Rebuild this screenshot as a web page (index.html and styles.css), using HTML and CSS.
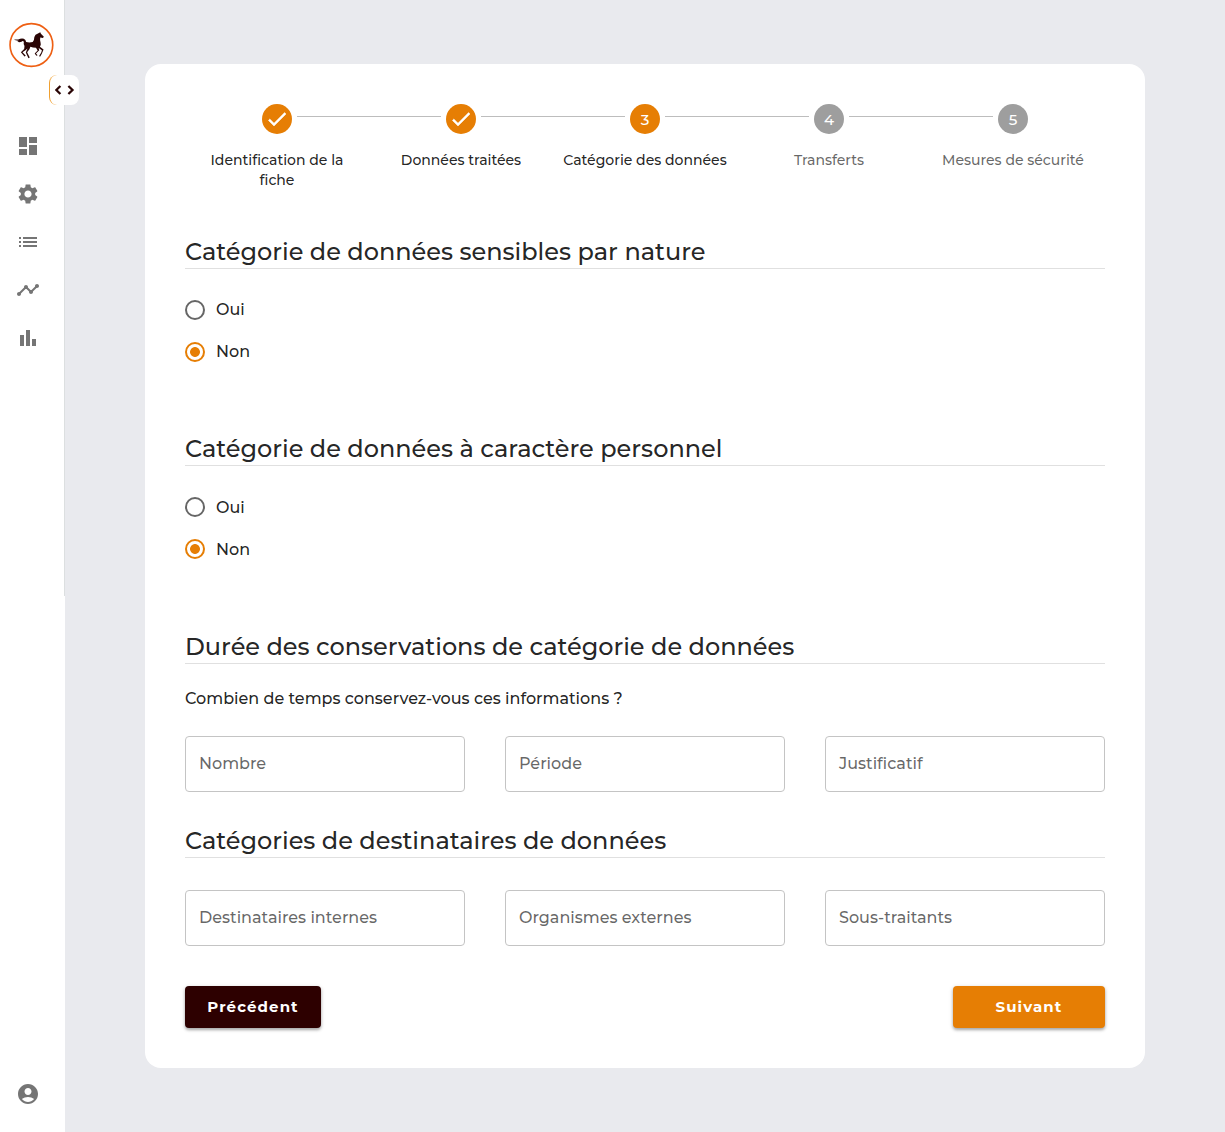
FILE: index.html
```html
<!DOCTYPE html>
<html lang="fr">
<head>
<meta charset="utf-8">
<title>Catégorie des données</title>
<link rel="stylesheet" href="styles.css">
</head>
<body>
<div class="app">
  <aside class="sidebar">
    <div class="edge"></div>
    <svg class="logo" viewBox="22.800 20 140 140">
      <circle cx="94" cy="90" r="65" fill="#fff" stroke="#ee5f13" stroke-width="5"/>
      <path fill="#2a0505" d="M42 73 L54 73 Q63 69 71 71 Q77 74 78 81 Q88 84 98 81 Q103 76 103 66 Q105 57 114 55 L121 51 L123 56 L132 65 L129 69 L121 67 Q119 76 122 83 Q124 89 120 95 L131 104 L126 116 L121 125 L117 124 L124 113 L126 106 L116 99 L118 106 L108 116 L113 121 L109 123 L104 116 L113 107 L108 98 Q98 98 91 95 L88 103 L81 112 L89 128 L85 130 L77 113 L82 101 L77 105 L67 112 L77 123 L73 125 L62 112 L72 102 L73 93 Q69 88 71 80 Q68 76 64 80 Q56 83 51 79 L56 78 L43 75 Z"/>
    </svg>
    <button class="toggle" aria-label="Menu">
      <svg width="20" height="12" viewBox="0 0 20 12" fill="none" stroke="#2a0505" stroke-width="2.3"><path d="M5.400 2 1.300 6l4.100 4M13.400 2l4.100 4-4.100 4"/></svg>
    </button>
    <nav class="nav">
      <svg viewBox="0 0 24 24"><path d="M3 13h8V3H3v10zm0 8h8v-6H3v6zm10 0h8V11h-8v10zm0-18v6h8V3h-8z"/></svg>
      <svg viewBox="0 0 24 24"><path d="M19.14 12.94c.04-.3.06-.61.06-.94 0-.32-.02-.64-.07-.94l2.03-1.58c.18-.14.23-.41.12-.61l-1.92-3.32c-.12-.22-.37-.29-.59-.22l-2.39.96c-.5-.38-1.03-.7-1.62-.94l-.36-2.54c-.04-.24-.24-.41-.48-.41h-3.84c-.24 0-.43.17-.47.41l-.36 2.54c-.59.24-1.13.57-1.62.94l-2.39-.96c-.22-.08-.47 0-.59.22L2.74 8.87c-.12.21-.08.47.12.61l2.03 1.58c-.05.3-.09.63-.09.94s.02.64.07.94l-2.03 1.58c-.18.14-.23.41-.12.61l1.92 3.32c.12.22.37.29.59.22l2.39-.96c.5.38 1.03.7 1.62.94l.36 2.54c.05.24.24.41.48.41h3.84c.24 0 .44-.17.47-.41l.36-2.54c.59-.24 1.13-.56 1.62-.94l2.39.96c.22.08.47 0 .59-.22l1.92-3.32c.12-.22.07-.47-.12-.61l-2.01-1.58zM12 15.6c-1.98 0-3.6-1.62-3.6-3.6s1.62-3.6 3.6-3.6 3.6 1.62 3.6 3.6-1.62 3.6-3.6 3.6z"/></svg>
      <svg viewBox="0 0 24 24"><path d="M3 13h2v-2H3v2zm0 4h2v-2H3v2zm0-8h2V7H3v2zm4 4h14v-2H7v2zm0 4h14v-2H7v2zM7 7v2h14V7H7z"/></svg>
      <svg viewBox="0 0 24 24"><path d="M23 8c0 1.1-.9 2-2 2-.18 0-.35-.02-.51-.07l-3.56 3.55c.05.16.07.34.07.52 0 1.1-.9 2-2 2s-2-.9-2-2c0-.18.02-.36.07-.52l-2.55-2.55c-.16.05-.34.07-.52.07s-.36-.02-.52-.07l-4.55 4.56c.05.16.07.33.07.51 0 1.1-.9 2-2 2s-2-.9-2-2 .9-2 2-2c.18 0 .35.02.51.07l4.56-4.55C8.02 9.36 8 9.18 8 9c0-1.1.9-2 2-2s2 .9 2 2c0 .18-.02.36-.07.52l2.55 2.55c.16-.05.34-.07.52-.07s.36.02.52.07l3.55-3.56C19.02 8.35 19 8.18 19 8c0-1.1.9-2 2-2s2 .9 2 2z"/></svg>
      <svg viewBox="0 0 24 24"><path d="M4 9h4v11H4zm12 4h4v7h-4zm-6-9h4v16h-4z"/></svg>
    </nav>
    <svg class="account" viewBox="0 0 24 24"><path d="M12 2C6.48 2 2 6.48 2 12s4.480 10 10 10 10-4.480 10-10S17.520 2 12 2zm0 4c1.930 0 3.500 1.570 3.500 3.500S13.930 13 12 13s-3.500-1.570-3.500-3.500S10.070 6 12 6zm0 14c-2.030 0-4.430-.820-6.140-2.880C7.550 15.800 9.680 15 12 15s4.450.800 6.140 2.120C16.430 19.180 14.030 20 12 20z"/></svg>
  </aside>

  <main class="main">
    <form class="card">
      <ol class="stepper">
        <li class="step on"><span class="track"><i></i><b><svg viewBox="0 0 24 24"><path d="M9 16.170 4.830 12l-1.420 1.410L9 19 21 7l-1.410-1.410z"/></svg></b><i class="line"></i></span><span class="label s1">Identification de la fiche</span></li>
        <li class="step on"><span class="track"><i class="line"></i><b><svg viewBox="0 0 24 24"><path d="M9 16.170 4.830 12l-1.420 1.410L9 19 21 7l-1.410-1.410z"/></svg></b><i class="line"></i></span><span class="label">Données traitées</span></li>
        <li class="step on"><span class="track"><i class="line"></i><b>3</b><i class="line"></i></span><span class="label">Catégorie des données</span></li>
        <li class="step"><span class="track"><i class="line"></i><b>4</b><i class="line"></i></span><span class="label">Transferts</span></li>
        <li class="step"><span class="track"><i class="line"></i><b>5</b><i></i></span><span class="label">Mesures de sécurité</span></li>
      </ol>

      <section class="choice">
        <h2>Catégorie de données sensibles par nature</h2>
        <label class="option"><input type="radio" name="sensible"><span>Oui</span></label>
        <label class="option"><input type="radio" name="sensible" checked><span>Non</span></label>
      </section>
      <section class="choice">
        <h2>Catégorie de données à caractère personnel</h2>
        <label class="option"><input type="radio" name="personnel"><span>Oui</span></label>
        <label class="option"><input type="radio" name="personnel" checked><span>Non</span></label>
      </section>
      <section class="duration">
        <h2>Durée des conservations de catégorie de données</h2>
        <p>Combien de temps conservez-vous ces informations ?</p>
        <div class="fields">
          <div class="field">Nombre</div>
          <div class="field">Période</div>
          <div class="field">Justificatif</div>
        </div>
      </section>
      <section class="recipients">
        <h2>Catégories de destinataires de données</h2>
        <div class="fields">
          <div class="field">Destinataires internes</div>
          <div class="field">Organismes externes</div>
          <div class="field">Sous-traitants</div>
        </div>
      </section>
      <div class="actions">
        <button type="button" class="btn prev">Précédent</button>
        <button type="button" class="btn next">Suivant</button>
      </div>
    </form>
  </main>
</div>
</body>
</html>
```
FILE: styles.css
```css
* { box-sizing: border-box; }
body {
  margin: 0;
  background: #e9eaee;
  color: rgba(0, 0, 0, .87);
  font-family: Montserrat, Inter, "Open Sans", sans-serif;
  font-size: 16px;
  font-weight: 500;
}
.app { display: flex; height: 1132px; }

.sidebar {
  position: relative;
  display: flex;
  flex-direction: column;
  width: 65px;
  flex: none;
  padding: 22px 0 26px 8px;
  background: #fff;
}
.edge {
  position: absolute;
  top: 0;
  right: 0;
  width: 1px;
  height: 596px;
  background: #dcdfe0;
}
.logo { width: 46px; height: 46px; flex: none; }
.toggle {
  position: absolute;
  left: 49px;
  top: 75px;
  width: 30px;
  height: 30px;
  display: flex;
  align-items: center;
  justify-content: center;
  padding: 0;
  background: #fff;
  border: 0;
  border-left: 1px solid #f0a030;
  border-radius: 8px;
}
.nav {
  display: flex;
  flex-direction: column;
  gap: 24px;
  margin: 66px 0 auto 8px;
}
.nav svg, .account { width: 24px; height: 24px; fill: #757575; }
.account { margin-left: 8px; flex: none; }

.main { flex: 1; padding: 64px 80px; }
.card {
  height: 1004px;
  padding: 40px;
  background: #fff;
  border-radius: 16px;
}

.stepper {
  display: flex;
  height: 132px;
  margin: 0;
  padding: 0;
  list-style: none;
}
.step { flex: 1; display: flex; flex-direction: column; align-items: center; }
.track { display: flex; align-self: stretch; gap: 5px; }
.track i { flex: 1; height: 1px; margin-top: 12px; }
.track .line { background: #bdbdbd; }
.track b {
  display: flex;
  align-items: center;
  justify-content: center;
  width: 30px;
  height: 30px;
  padding-top: 1px;
  border-radius: 50%;
  background: #9e9e9e;
  color: #fff;
  font-size: 15px;
  font-weight: 500;
}
.track svg { width: 24px; height: 24px; margin-top: -2px; fill: #fff; stroke: #fff; stroke-width: .5; }
.on b { background: #e67e04; }
.label {
  margin-top: 16px;
  padding: 0 8px;
  color: rgba(0, 0, 0, .6);
  font-size: 14px;
  line-height: 20px;
  text-align: center;
  white-space: nowrap;
}
.s1 { width: 160px; white-space: normal; }
.on .label { color: rgba(0, 0, 0, .87); }

h2 {
  height: 33px;
  margin: 0;
  border-bottom: 1px solid #e0e0e0;
  font-size: 24px;
  font-weight: 500;
  line-height: 32px;
}
.choice { height: 197.4px; }
.choice h2 { margin-bottom: 20px; }
.option {
  display: flex;
  align-items: center;
  gap: 11px;
  height: 42px;
  line-height: 24px;
}
.option span { padding-top: .6px; }
.option input {
  appearance: none;
  width: 20px;
  height: 20px;
  margin: 0;
  border: 2px solid #666;
  border-radius: 50%;
}
.option input:checked {
  border-color: #e67e04;
  background: radial-gradient(circle, #e67e04 4.5px, #fff 5.3px);
}

.duration { height: 194.2px; }
.duration p { margin: 23px 0 25px; line-height: 24px; }
.fields { display: grid; grid-template-columns: repeat(3, 280px); gap: 40px; }
.field {
  display: flex;
  align-items: center;
  height: 56px;
  padding: 0 13px 1px;
  border: 1px solid #c4c4c4;
  border-radius: 4px;
  color: rgba(0, 0, 0, .6);
}
.recipients .fields { margin-top: 32px; }

.actions { display: flex; justify-content: space-between; margin-top: 40px; }
.btn {
  height: 42px;
  padding: 0;
  border: 0;
  border-radius: 4px;
  box-shadow: 0 2px 3px rgba(0, 0, 0, .28), 0 1px 5px rgba(0, 0, 0, .14);
  color: #fff;
  font-family: inherit;
  font-size: 15px;
  font-weight: 700;
  line-height: 26px;
  letter-spacing: 1.1px;
}
.prev { width: 136px; background: #2d0000; }
.next { width: 152px; background: #e67e04; }
```
